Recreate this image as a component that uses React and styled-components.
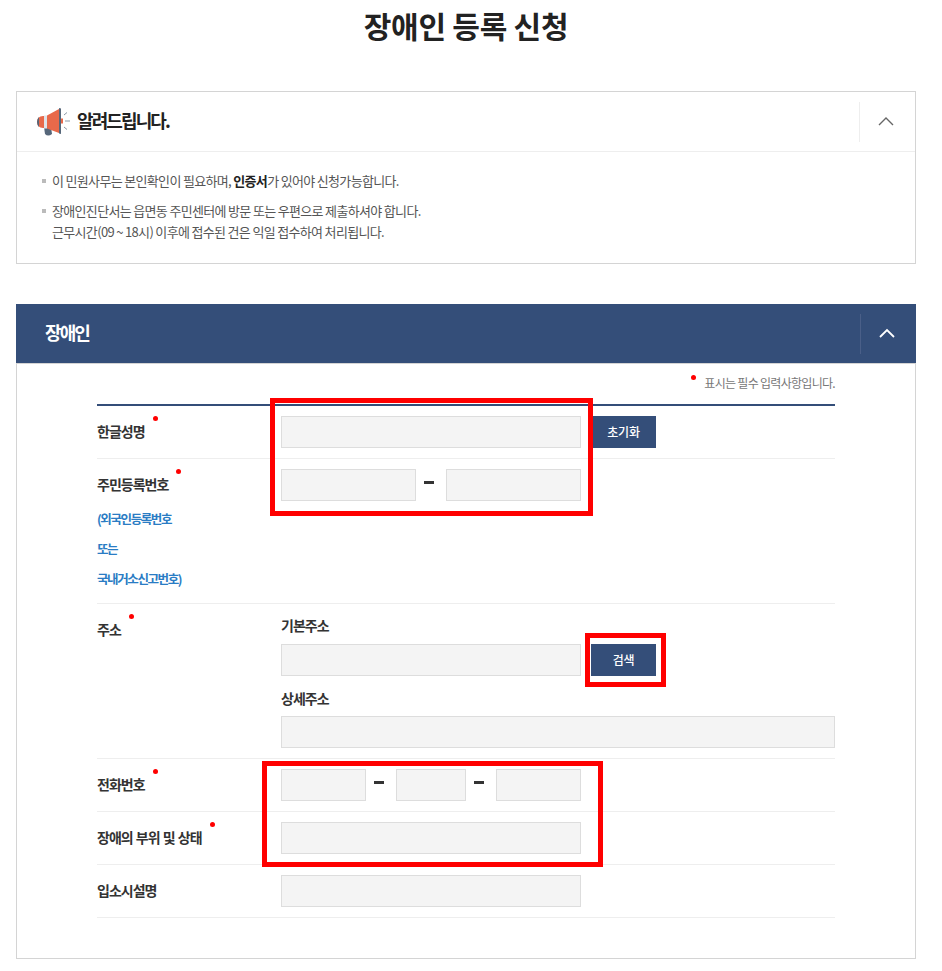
import styled, { createGlobalStyle } from "styled-components";

const Global = createGlobalStyle`
  html, body { margin: 0; padding: 0; background: #fff; }
  body {
    font-family: "Noto Sans CJK KR", "Noto Sans", sans-serif;
    color: #333;
  }
`;

const Page = styled.div`
  position: relative;
  width: 942px;
  height: 971px;
  overflow: hidden;
  padding: 0 26px 0 16px;
  box-sizing: border-box;
`;

const Title = styled.h1`
  margin: 0;
  height: 91px;
  padding-top: 3px;
  box-sizing: border-box;
  text-align: center;
  font-size: 30px;
  line-height: 44px;
  font-weight: 700;
  letter-spacing: -0.25px;
  color: #222;
`;

const Notice = styled.section`
  border: 1px solid #d4d4d4;
  height: 173px;
  box-sizing: border-box;
  margin-bottom: 40px;
`;

const NoticeHead = styled.div`
  display: flex;
  align-items: center;
  height: 60px;
  padding-left: 20px;
  box-sizing: border-box;
  border-bottom: 1px solid #eee;
`;

const NoticeTitle = styled.h2`
  margin: 0 0 0 7px;
  padding-bottom: 4px;
  flex: 1;
  font-size: 18px;
  font-weight: 700;
  letter-spacing: -1.9px;
  color: #222;
`;

const Toggle = styled.div`
  width: 56px;
  height: 40px;
  padding: 0 4px 2px 0;
  box-sizing: border-box;
  display: flex;
  align-items: center;
  justify-content: center;
  border-left: 1px solid ${(p) => (p.$dark ? "#4a5f88" : "#eee")};
  color: ${(p) => (p.$dark ? "#fff" : "#666")};
`;

const NoticeList = styled.ul`
  list-style: none;
  margin: 0;
  padding: 18px 0 0 25px;
`;

const NoticeItem = styled.li`
  position: relative;
  padding-left: 10px;
  margin-bottom: 9px;
  font-size: 13px;
  line-height: 21px;
  letter-spacing: -0.67px;
  color: #555;

  &::before {
    content: "";
    position: absolute;
    left: 0;
    top: 9px;
    width: 4px;
    height: 4px;
    background: #bbb;
  }

  strong {
    color: #222;
    font-weight: 700;
  }
`;

const Section = styled.section`
  height: 655px;
  box-sizing: border-box;
  border: 1px solid #d4d4d4;
  border-top: 0;
`;

const SectionHead = styled.div`
  display: flex;
  align-items: center;
  height: 59px;
  margin: 0 -1px;
  padding-left: 29px;
  box-sizing: border-box;
  background: #344e79;
`;

const SectionTitle = styled.h2`
  margin: 0;
  padding-bottom: 4px;
  flex: 1;
  font-size: 18px;
  font-weight: 700;
  letter-spacing: -1.9px;
  color: #fff;
`;

const FormWrap = styled.div`
  padding: 0 80px;
  border-top: 1px solid #d4d4d4;
`;

const RequiredNote = styled.p`
  margin: 0;
  height: 40px;
  padding-top: 9px;
  box-sizing: border-box;
  text-align: right;
  font-size: 12px;
  line-height: 20px;
  letter-spacing: -0.7px;
  color: #777;
`;

const NoteDot = styled.i`
  display: inline-block;
  width: 5px;
  height: 5px;
  margin-right: 8px;
  border-radius: 50%;
  background: #f00;
  vertical-align: 8px;
`;

const Form = styled.div`
  border-top: 2px solid #344e79;
`;

const Row = styled.div`
  display: flex;
  height: ${(p) => p.$h}px;
  box-sizing: border-box;
  border-bottom: 1px solid #eee;
  padding-top: 10px;
`;

const LabelCell = styled.div`
  width: 184px;
  flex: none;
`;

const Label = styled.div`
  position: relative;
  display: inline-block;
  font-size: 14px;
  line-height: 30px;
  font-weight: 700;
  letter-spacing: -1px;
  word-spacing: 1px;
  color: #333;

  ${(p) =>
    p.$req &&
    `&::after {
      content: "";
      position: absolute;
      right: -13px;
      top: 0;
      width: 5px;
      height: 5px;
      border-radius: 50%;
      background: #f00;
    }`}
`;

const SubLabel = styled.div`
  font-size: 12.5px;
  line-height: 30px;
  font-weight: 700;
  letter-spacing: -1.4px;
  color: #2a7cc4;
  margin-top: ${(p) => (p.$first ? "5px" : "0")};
`;

const Field = styled.div`
  flex: 1;
  display: flex;
  align-items: flex-start;
`;

const Stack = styled.div`
  flex: 1;
  padding-top: 1px;
`;

const FieldTitle = styled.div`
  font-size: 14px;
  line-height: 20px;
  font-weight: 700;
  letter-spacing: -1px;
  color: #333;
  margin-bottom: ${(p) => p.$mb}px;
`;

const Input = styled.input`
  display: block;
  width: ${(p) => p.$w}px;
  height: 32px;
  padding: 0;
  box-sizing: border-box;
  border: 1px solid #ddd;
  background: #f4f4f4;
  outline: none;
`;

const Dash = styled.span`
  width: ${(p) => p.$w}px;
  flex: none;
  height: 27px;
  padding-right: 4px;
  box-sizing: border-box;
  display: flex;
  align-items: center;
  justify-content: center;

  &::before {
    content: "";
    width: 10px;
    height: 3px;
    background: #333;
  }
`;

const Button = styled.button`
  width: 63px;
  height: 32px;
  padding: 0 2px 2px 0;
  margin-left: 12px;
  border: 0;
  background: #344e79;
  color: #fff;
  font: 500 12px "Noto Sans CJK KR", sans-serif;
  letter-spacing: -0.2px;
`;

const SearchButton = styled(Button)`
  width: 65px;
  margin-left: 10px;
  padding: 0 0 2px;
`;

const InlineRow = styled.div`
  display: flex;
  margin-bottom: ${(p) => p.$mb || 0}px;
`;

const RedBox = styled.div`
  position: absolute;
  left: ${(p) => p.$x}px;
  top: ${(p) => p.$y}px;
  width: ${(p) => p.$w}px;
  height: ${(p) => p.$h}px;
  box-sizing: border-box;
  border: 5px solid #f00;
  pointer-events: none;
`;

function Chevron({ weight }) {
  return (
    <svg width="16" height="10" viewBox="0 0 16 10" fill="none" stroke="currentColor" strokeWidth={weight}>
      <path d="M1 9 L8 2 L15 9" />
    </svg>
  );
}

function Megaphone() {
  return (
    <svg width="33" height="28" viewBox="0 0 33 28">
      <path d="M7 19 H14 L15 26 Q11 29 8 26 Z" fill="#56677a" />
      <path d="M6 8 H8 V20 H6 Q0 19.500 0 14 Q0 8.500 6 8 Z" fill="#e8694a" />
      <path d="M2 9 Q0 11 0 14 Q0 17 2 19 Z" fill="#56677a" />
      <rect x="7" y="7.500" width="3" height="13" fill="#dfe3e8" />
      <path d="M10 7.500 L22 1 V25 L10 20.500 Z" fill="#e8694a" />
      <path d="M22 0 L24 0.500 V26 L22 25.500 Z" fill="#56677a" />
      <rect x="24" y="10.500" width="2" height="5" fill="#e8694a" />
      <path d="M27 7 L30 4.500 M28 13 H33 M27 19 L30 21.500" stroke="#8a97a5" strokeWidth="1" fill="none" />
    </svg>
  );
}

export default function App() {
  return (
    <Page>
      <Global />
      <Title>장애인 등록 신청</Title>

      <Notice>
        <NoticeHead>
          <Megaphone />
          <NoticeTitle>알려드립니다.</NoticeTitle>
          <Toggle>
            <Chevron weight={1.4} />
          </Toggle>
        </NoticeHead>
        <NoticeList>
          <NoticeItem>
            이 민원사무는 본인확인이 필요하며, <strong>인증서</strong>가 있어야 신청가능합니다.
          </NoticeItem>
          <NoticeItem>
            장애인진단서는 읍면동 주민센터에 방문 또는 우편으로 제출하셔야 합니다.
            <br />
            근무시간(09 ~ 18시) 이후에 접수된 건은 익일 접수하여 처리됩니다.
          </NoticeItem>
        </NoticeList>
      </Notice>

      <Section>
        <SectionHead>
          <SectionTitle>장애인</SectionTitle>
          <Toggle $dark>
            <Chevron weight={1.8} />
          </Toggle>
        </SectionHead>
        <FormWrap>
          <RequiredNote>
            <NoteDot />
            표시는 필수 입력사항입니다.
          </RequiredNote>
          <Form>
            <Row $h={53}>
              <LabelCell>
                <Label $req>한글성명</Label>
              </LabelCell>
              <Field>
                <Input $w={300} />
                <Button>초기화</Button>
              </Field>
            </Row>
            <Row $h={145}>
              <LabelCell>
                <Label $req>주민등록번호</Label>
                <SubLabel $first>(외국인등록번호</SubLabel>
                <SubLabel>또는</SubLabel>
                <SubLabel>국내거소신고번호)</SubLabel>
              </LabelCell>
              <Field>
                <Input $w={135} />
                <Dash $w={30} />
                <Input $w={135} />
              </Field>
            </Row>
            <Row $h={155}>
              <LabelCell>
                <Label $req>주소</Label>
              </LabelCell>
              <Stack>
                <FieldTitle $mb={9}>기본주소</FieldTitle>
                <InlineRow $mb={12}>
                  <Input $w={300} />
                  <SearchButton>검색</SearchButton>
                </InlineRow>
                <FieldTitle $mb={8}>상세주소</FieldTitle>
                <Input $w={554} />
              </Stack>
            </Row>
            <Row $h={53}>
              <LabelCell>
                <Label $req>전화번호</Label>
              </LabelCell>
              <Field>
                <Input $w={85} />
                <Dash $w={30} />
                <Input $w={70} />
                <Dash $w={30} />
                <Input $w={85} />
              </Field>
            </Row>
            <Row $h={53}>
              <LabelCell>
                <Label $req>장애의 부위 및 상태</Label>
              </LabelCell>
              <Field>
                <Input $w={300} />
              </Field>
            </Row>
            <Row $h={53}>
              <LabelCell>
                <Label>입소시설명</Label>
              </LabelCell>
              <Field>
                <Input $w={300} />
              </Field>
            </Row>
          </Form>
        </FormWrap>
      </Section>

      <RedBox $x={270} $y={398} $w={323} $h={118} />
      <RedBox $x={585} $y={633} $w={81} $h={54} />
      <RedBox $x={262} $y={761} $w={341} $h={106} />
    </Page>
  );
}
